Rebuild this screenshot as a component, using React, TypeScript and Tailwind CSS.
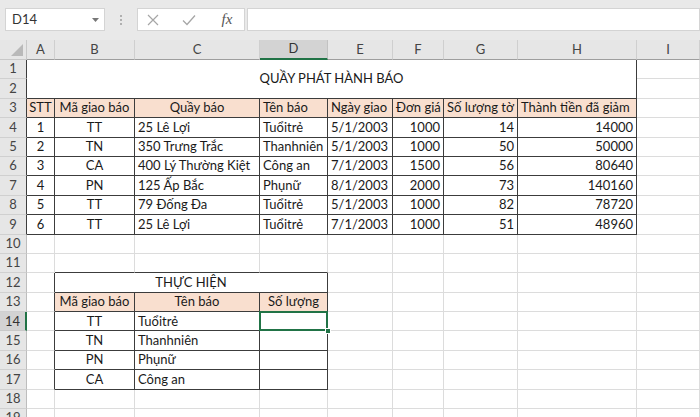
type Align = "l" | "c" | "r";
type CellDef = { t: string; a?: Align; bg?: boolean };

// rows 1..19, columns A..I (0..8)
const data: Record<number, (CellDef | null)[]> = {
  1: [{ t: "QUẦY PHÁT HÀNH BÁO", a: "c" }],
  3: [
    { t: "STT", a: "c", bg: true },
    { t: "Mã giao báo", a: "c", bg: true },
    { t: "Quầy báo", a: "c", bg: true },
    { t: "Tên báo", a: "l", bg: true },
    { t: "Ngày giao", a: "l", bg: true },
    { t: "Đơn giá", a: "l", bg: true },
    { t: "Số lượng tờ", a: "l", bg: true },
    { t: "Thành tiền đã giảm", a: "l", bg: true },
  ],
  12: [null, { t: "THỰC HIỆN", a: "c" }],
  13: [
    null,
    { t: "Mã giao báo", a: "c", bg: true },
    { t: "Tên báo", a: "c", bg: true },
    { t: "Số lượng", a: "c", bg: true },
  ],
};

const rows = [
  ["1", "TT", "25 Lê Lợi", "Tuổitrẻ", "5/1/2003", "1000", "14", "14000"],
  ["2", "TN", "350 Trưng Trắc", "Thanhniên", "5/1/2003", "1000", "50", "50000"],
  ["3", "CA", "400 Lý Thường Kiệt", "Công an", "7/1/2003", "1500", "56", "80640"],
  ["4", "PN", "125 Ấp Bắc", "Phụnữ", "8/1/2003", "2000", "73", "140160"],
  ["5", "TT", "79 Đống Đa", "Tuổitrẻ", "5/1/2003", "1000", "82", "78720"],
  ["6", "TT", "25 Lê Lợi", "Tuổitrẻ", "7/1/2003", "1000", "51", "48960"],
];
const aligns: Align[] = ["c", "c", "l", "l", "l", "r", "r", "r"];
rows.forEach((row, i) => {
  data[4 + i] = row.map((t, c) => ({ t, a: aligns[c] }));
});

const lower = [
  ["TT", "Tuổitrẻ"],
  ["TN", "Thanhniên"],
  ["PN", "Phụnữ"],
  ["CA", "Công an"],
];
lower.forEach((row, i) => {
  data[14 + i] = [null, { t: row[0], a: "c" }, { t: row[1], a: "l" }, { t: "" }];
});

const LETTERS = ["A", "B", "C", "D", "E", "F", "G", "H", "I"];

function inTable(r: number, c: number) {
  return (r >= 1 && r <= 9 && c >= 0 && c <= 7) || (r >= 12 && r <= 17 && c >= 1 && c <= 3);
}

function covered(r: number, c: number) {
  if (r === 1 && c >= 1 && c <= 7) return true;
  if (r === 2 && c >= 0 && c <= 7) return true;
  if (r === 12 && (c === 2 || c === 3)) return true;
  return false;
}

function FormulaBar() {
  return (
    <div className="h-[40px] bg-[#e9e9e9] flex items-start pt-[8px]">
      <div className="ml-[5px] w-[100px] h-[23px] bg-white border border-[#d4d4d4] flex items-center justify-between pl-[6px] pr-[5px]">
        <span className="text-[13px] text-[#333]">D14</span>
        <svg width="7" height="4" viewBox="0 0 7 4">
          <path d="M0 0h7L3.5 4z" fill="#777" />
        </svg>
      </div>
      <div className="w-[32px] h-[23px] flex flex-col items-center justify-center gap-[2px]">
        <span className="w-[2px] h-[2px] bg-[#b0b0b0]" />
        <span className="w-[2px] h-[2px] bg-[#b0b0b0]" />
        <span className="w-[2px] h-[2px] bg-[#b0b0b0]" />
      </div>
      <div className="w-[108px] h-[23px] bg-white border border-[#d4d4d4] grid grid-cols-[30px_42px_34px] items-center justify-items-center">
        <svg width="12" height="12" viewBox="0 0 12 12">
          <path d="M1 1l10 10M11 1L1 11" stroke="#a6a6a6" strokeWidth="1.2" />
        </svg>
        <svg width="14" height="12" viewBox="0 0 14 12">
          <path d="M1 6.5l4 4L13 1.5" stroke="#a6a6a6" strokeWidth="1.3" fill="none" />
        </svg>
        <span className="text-[15px] italic text-[#555] font-['Liberation_Serif',serif] leading-none">fx</span>
      </div>
      <div className="ml-[2px] flex-1 h-[23px] bg-white border border-[#d4d4d4]" />
    </div>
  );
}

export default function App() {
  const cells: React.ReactNode[] = [];

  // column headers
  cells.push(
    <div key="corner" className="relative bg-[#e6e6e6] border-r border-b border-[#c8c8c8]">
      <svg className="absolute right-[3px] bottom-[3px]" width="12" height="12" viewBox="0 0 12 12">
        <path d="M12 0V12H0z" fill="#b9b9b9" />
      </svg>
    </div>
  );
  LETTERS.forEach((l, c) => {
    const sel = c === 3;
    cells.push(
      <div
        key={"h" + l}
        className={
          "flex items-center justify-center text-[13px] border-r " +
          (sel
            ? "bg-[#d3d3d3] text-[#333] border-r-[#c2c2c2] border-b-2 border-b-[#217346]"
            : "bg-[#e6e6e6] text-[#444] border-r-[#cfcfcf] border-b border-b-[#9e9e9e]")
        }
      >
        {l}
      </div>
    );
  });

  for (let r = 1; r <= 19; r++) {
    const selRow = r === 14;
    cells.push(
      <div
        key={"r" + r}
        className={
          "flex items-center justify-center text-[13px] border-b " +
          (selRow
            ? "bg-[#d3d3d3] text-[#333] border-b-[#c8c8c8] border-r-2 border-r-[#217346]"
            : "bg-[#e6e6e6] text-[#444] border-b-[#d0d0d0] border-r " +
              (inTable(r, 0) ? "border-r-[#3c3c3c]" : "border-r-[#bdbdbd]"))
        }
      >
        {r}
      </div>
    );
    const rowData = data[r] || [];
    for (let c = 0; c < 9; c++) {
      if (covered(r, c)) continue;
      const def = rowData[c];
      let span = "";
      let lastC = c;
      let lastR = r;
      if (r === 1 && c === 0) {
        span = "col-span-8 row-span-2";
        lastC = 7;
        lastR = 2;
      } else if (r === 12 && c === 1) {
        span = "col-span-3";
        lastC = 3;
      }
      const darkR = inTable(r, lastC) || inTable(r, lastC + 1);
      const darkB = inTable(lastR, c) || inTable(lastR + 1, c);
      const align =
        def?.a === "c" ? "justify-center" : def?.a === "r" ? "justify-end pr-[3px]" : "justify-start pl-[3px]";
      const selected = r === 14 && c === 3;
      cells.push(
        <div
          key={r + "-" + c}
          className={
            "relative flex items-center whitespace-nowrap overflow-visible border-r border-b text-[13px] text-[#1a1a1a] " +
            span +
            " " +
            align +
            " " +
            (def?.bg ? "bg-[#f9dfcf] " : "bg-white ") +
            (darkR ? "border-r-[#3c3c3c] " : "border-r-[#dcdcdc] ") +
            (darkB ? "border-b-[#3c3c3c]" : "border-b-[#dcdcdc]")
          }
        >
          {def?.t}
          {selected && (
            <>
              <div className="absolute -left-[1px] -top-[1px] -right-[1px] -bottom-[1px] border-2 border-[#217346] z-10" />
              <div className="absolute -right-[4px] -bottom-[4px] w-[6px] h-[6px] bg-[#217346] border border-white z-20" />
            </>
          )}
        </div>
      );
    }
  }

  return (
    <div className="w-[700px] h-[417px] overflow-hidden bg-white font-['Lato','Open_Sans',sans-serif]">
      <FormulaBar />
      <div className="grid grid-cols-[27px_28px_80px_125px_68px_65px_51px_74px_119px_1fr] grid-rows-[20px_repeat(19,19.4px)]">
        {cells}
      </div>
    </div>
  );
}
